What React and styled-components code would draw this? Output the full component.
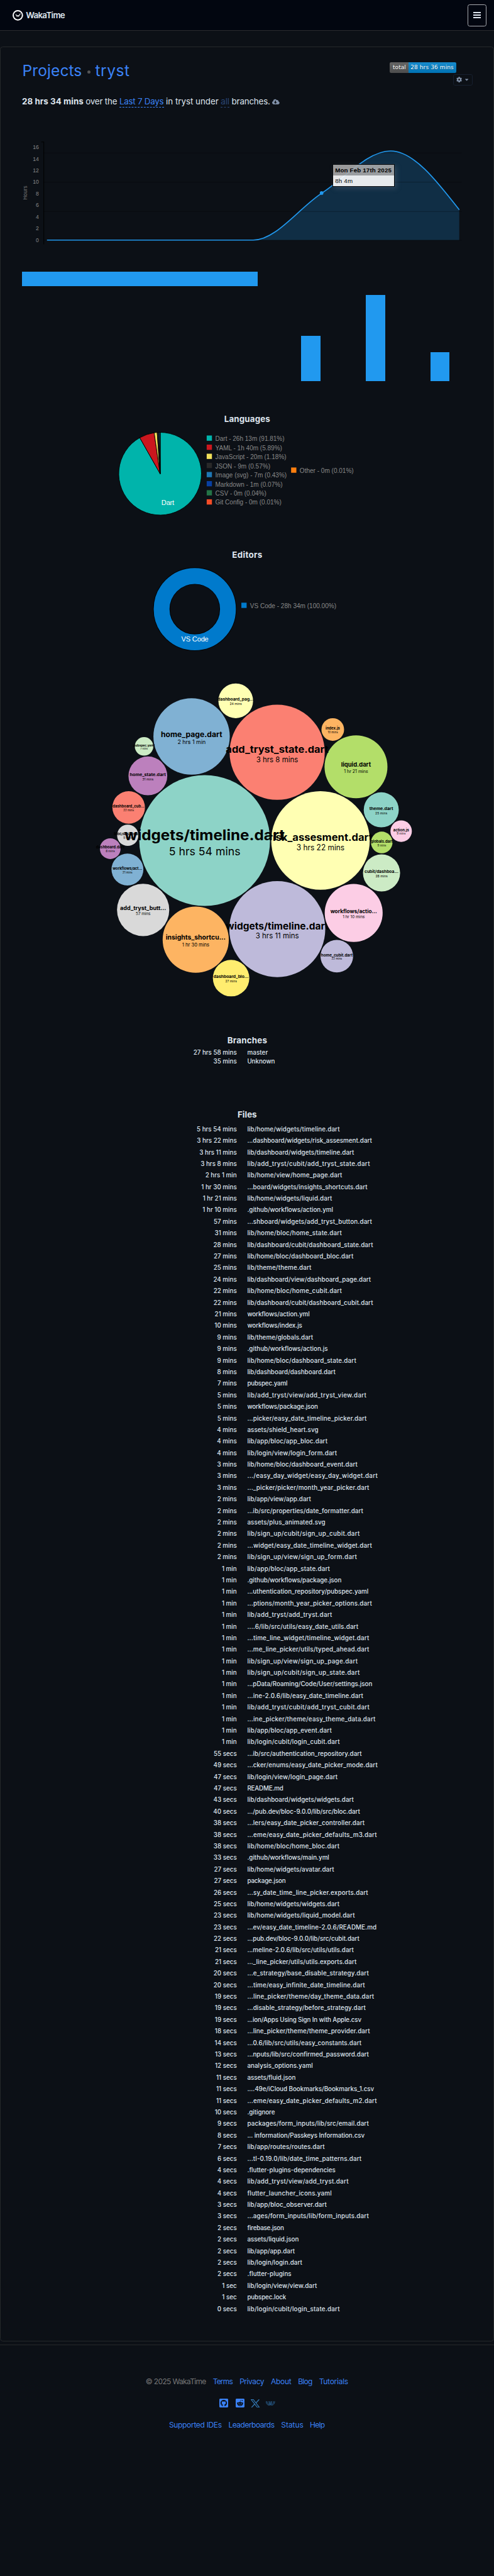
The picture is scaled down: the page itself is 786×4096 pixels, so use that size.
import React, { useLayoutEffect, useRef, useState } from "react";
import styled, { createGlobalStyle } from "styled-components";
import {
  FaGithubSquare,
  FaRedditSquare,
  FaCog,
  FaCaretDown,
  FaCloudDownloadAlt,
} from "react-icons/fa";

// Design units to CSS pixels.
const SCALE = 0.5574;
const px = (n) => `${(n * SCALE).toFixed(3)}px`;

const sans = `Inter, Roboto, "Liberation Sans", sans-serif`;
const chartFont = `"Liberation Sans", Arial, sans-serif`;

const Global = createGlobalStyle`
  html, body { margin: 0; padding: 0; background: #0c1016; }
  body { font-family: ${sans}; color: #dfe5ee; overflow-x: hidden; }
  * { box-sizing: border-box; }
  svg { display: block; }
`;

/* ---------- text set to a fixed measure ---------- */

const Measure = styled.span`
  display: inline-block;
  flex: none;
  white-space: nowrap;
  width: ${(p) => px(p.$w)};
`;

function Fit({ w, children }) {
  const ref = useRef(null);
  const [spacing, setSpacing] = useState(0);
  useLayoutEffect(() => {
    const natural = ref.current.getBoundingClientRect().width;
    setSpacing((w * SCALE - natural) / Math.max(1, children.length - 1));
  }, [w, children]);
  return (
    <Measure $w={w}>
      <span ref={ref} style={{ letterSpacing: spacing }}>{children}</span>
    </Measure>
  );
}

/* ---------- page frame ---------- */

const Page = styled.div`
  display: flex;
  flex-direction: column;
  min-height: 4096px;
  background: #0c1016;
`;

const Header = styled.header`
  display: flex;
  align-items: flex-start;
  justify-content: space-between;
  height: ${px(88)};
  padding: ${px(12)} ${px(22)} 0 ${px(36)};
  background: #020610;
  border-bottom: 1px solid #2b2c2f;
`;

const Brand = styled.div`
  display: flex;
  align-items: center;
  gap: ${px(8)};
  margin-top: ${px(17)};
  height: ${px(30)};
  font-size: ${px(24)};
  font-weight: 600;
  line-height: ${px(30)};
`;

const MenuButton = styled.button`
  display: flex;
  flex-direction: column;
  align-items: center;
  justify-content: center;
  gap: ${px(2.8)};
  width: ${px(53)};
  height: ${px(63)};
  padding: 0 0 ${px(1)};
  background: transparent;
  border: 1px solid #a9abb0;
  border-radius: ${px(6)};
`;

const MenuLine = styled.span`
  width: ${px(21.5)};
  height: ${px(4.3)};
  background: #dfe5ee;
`;

const Card = styled.main`
  margin-top: ${px(45)};
  height: ${px(6547)};
  padding: ${px(43.5)} ${px(60)} 0 ${px(61)};
  border: 1px solid #25282a;
  border-radius: ${px(8)};
`;

/* ---------- title ---------- */

const TitleRow = styled.div`
  display: flex;
  justify-content: space-between;
  align-items: flex-start;
  height: ${px(66)};
`;

const Title = styled.h1`
  display: flex;
  align-items: center;
  margin: 0 0 0 ${px(1)};
  height: ${px(50)};
  font-size: ${px(44)};
  font-weight: 400;
  line-height: ${px(50)};
  color: #3b82f6;
`;

const TitleDot = styled.span`
  width: ${px(10)};
  height: ${px(10)};
  margin: ${px(4)} ${px(13)} 0 ${px(15)};
  border-radius: 50%;
  background: #555;
`;

const Tools = styled.div`
  display: flex;
  flex-direction: column;
  align-items: flex-end;
  gap: ${px(3)};
`;

const Badge = styled.div`
  display: flex;
  height: ${px(30)};
  margin-right: ${px(45)};
  border-radius: ${px(4)};
  overflow: hidden;
  font-family: "DejaVu Sans", Verdana, sans-serif;
  font-size: ${px(16)};
  line-height: ${px(30)};
  color: #fff;
  text-shadow: 0 ${px(1.5)} 0 rgba(1, 1, 1, 0.3);
`;

const BadgePart = styled.span`
  width: ${(p) => px(p.$w)};
  padding-left: ${(p) => px(p.$pad)};
  background: linear-gradient(#ffffff18, #00000018) ${(p) => p.$bg};
`;

const CogButton = styled.button`
  display: flex;
  align-items: center;
  justify-content: space-between;
  width: ${px(55)};
  height: ${px(32)};
  padding: 0 ${px(6)} 0 ${px(7)};
  color: #8090a8;
  font-size: ${px(16.5)};
  background: transparent;
  border: 1px solid #172030;
  border-radius: ${px(5)};
`;

/* ---------- summary ---------- */

const Summary = styled.div`
  display: flex;
  align-items: center;
  gap: ${px(6.2)};
  margin-top: ${px(31)};
  height: ${px(30)};
  font-size: ${px(24)};
  line-height: ${px(30)};
`;

const Strong = styled.strong`
  display: flex;
  font-weight: 700;
`;

const Picker = styled.a`
  display: flex;
  height: ${px(31)};
  margin-bottom: ${px(-1)};
  color: ${(p) => (p.$dim ? "#2b4675" : "#3b82f6")};
  border-bottom: 1px dashed currentColor;
`;

const CloudIcon = styled(FaCloudDownloadAlt)`
  color: #8090a8;
  font-size: ${px(21)};
`;

/* ---------- charts ---------- */

const Chart = styled.svg`
  width: ${(p) => px(p.$w)};
  height: ${(p) => px(p.$h)};
  margin-top: ${(p) => px(p.$top)};
  margin-left: ${px(-62)};
  overflow: visible;
  font-family: ${chartFont};
`;

const TimelineWrap = styled.div`
  position: relative;
  margin-top: ${px(79.4)};
`;

const Tooltip = styled.div`
  position: absolute;
  left: ${px(886)};
  top: ${px(84.5)};
  width: ${px(177)};
  border: 1px solid #05080b;
  font-family: ${chartFont};
  font-size: ${px(17.5)};
  color: #000;
  box-shadow: ${px(6)} ${px(6)} ${px(14)} rgba(130, 140, 150, 0.25);
`;

const TooltipLine = styled.div`
  height: ${px(30.5)};
  padding-left: ${px(6)};
  line-height: ${px(30.5)};
  font-weight: ${(p) => (p.$head ? 700 : 400)};
  background: ${(p) => (p.$head ? "rgba(170,170,170,0.9)" : "rgba(255,255,255,0.9)")};
`;

const TotalBar = styled.div`
  width: ${px(673)};
  height: ${px(42)};
  margin-top: ${px(55)};
  background: #2199ef;
`;

const DayBars = styled.div`
  display: flex;
  justify-content: flex-end;
  align-items: flex-end;
  gap: ${px(129)};
  height: ${px(247)};
  margin-top: ${px(24)};
  padding-right: ${px(65)};
`;

const DayBar = styled.div`
  width: ${px(55.3)};
  height: ${(p) => px(p.$h)};
  background: #2199ef;
`;

const Heading = styled.h3`
  display: flex;
  justify-content: center;
  height: ${px(30)};
  margin: ${(p) => px(p.$top)} 0 0;
  padding-top: ${px(1.5)};
  font-size: ${px(24)};
  font-weight: 700;
  line-height: ${px(30)};
`;

const BLUE = "#2199ef";

function Timeline() {
  const line =
    "M134,686 H723 C788.4,686 853.6,594.2 919,551.8 C984.4,509.4 1049.6,431.7 1115,431.7 C1180.4,431.7 1245.6,515.6 1311,599.6";
  return (
    <TimelineWrap>
      <Chart $w={1410} $h={335} $top={0} viewBox="0 385 1410 335">
        <path d={`${line} V686 Z`} fill={BLUE} opacity="0.22" />
        {[437.4, 520.6, 604.4, 686.5].map((y) => (
          <path key={y} d={`M125,${y} H1318`} stroke="#000" strokeOpacity="0.4" strokeWidth="1.3" />
        ))}
        <path d="M118,406.3 H125 V698" fill="none" stroke="#000" strokeWidth="1.8" />
        {[16, 14, 12, 10, 8, 6, 4, 2, 0].map((v, i) => (
          <text key={v} x="111" y={426.4 + i * 33.1} textAnchor="end" fontSize="15.5" fill="#888">
            {v}
          </text>
        ))}
        <text transform="translate(78 551) rotate(-90)" textAnchor="middle" fontSize="15" fill="#777" textLength="40">
          Hours
        </text>
        <path d={line} fill="none" stroke={BLUE} strokeWidth="3" />
        <circle cx="918" cy="551.8" r="5.2" fill={BLUE} />
      </Chart>
      <Tooltip>
        <TooltipLine $head><Fit w={161}>Mon Feb 17th 2025</Fit></TooltipLine>
        <TooltipLine><Fit w={50}>8h 4m</Fit></TooltipLine>
      </Tooltip>
    </TimelineWrap>
  );
}

const LANGUAGES = [
  ["Dart - 26h 13m (91.81%)", 91.81, "#00b4ab", 197.5],
  ["YAML - 1h 40m (5.89%)", 5.89, "#cb171e", 191],
  ["JavaScript - 20m (1.18%)", 1.18, "#f1e05a", 203],
  ["JSON - 9m (0.57%)", 0.57, "#292929", 157],
  ["Image (svg) - 7m (0.43%)", 0.43, "#1f77b4", 204],
  ["Markdown - 1m (0.07%)", 0.07, "#083fa1", 192],
  ["CSV - 0m (0.04%)", 0.04, "#237346", 146],
  ["Git Config - 0m (0.01%)", 0.01, "#f44d27", 189],
];

function slicePath(cx, cy, r, from, to) {
  const at = (f) => [cx + r * Math.sin(f * 2 * Math.PI), cy - r * Math.cos(f * 2 * Math.PI)];
  const [x1, y1] = at(from);
  const [x2, y2] = at(to);
  return `M${cx},${cy} L${x1},${y1} A${r},${r} 0 ${to - from > 0.5 ? 1 : 0} 1 ${x2},${y2} Z`;
}

function LegendItem({ x, y, color, label, w }) {
  return (
    <g>
      <rect x={x} y={y} width="15" height="15" fill={color} />
      <text x={x + 24.5} y={y + 15.4} fontSize="18" fill="#888" textLength={w} lengthAdjust="spacingAndGlyphs">
        {label}
      </text>
    </g>
  );
}

function LanguagesPie() {
  let start = 0;
  return (
    <Chart $w={1410} $h={255} $top={14.8} viewBox="0 1225 1410 255">
      {LANGUAGES.map(([label, pct, color]) => {
        const from = start;
        start += pct / 100;
        return (
          <path key={label} d={slicePath(457, 1351, 118, from, start)} fill={color} stroke="#000" strokeWidth="1.6" />
        );
      })}
      <text x="479" y="1440" textAnchor="middle" fontSize="20" fill="#fff" textLength="36.5">Dart</text>
      {LANGUAGES.map(([label, , color, w], i) => (
        <LegendItem key={label} x={590} y={1242 + i * 26} color={color} label={label} w={w} />
      ))}
      <LegendItem x={831} y={1333.3} color="#ff7f0e" label="Other - 0m (0.01%)" w={154} />
    </Chart>
  );
}

function EditorsDonut() {
  return (
    <Chart $w={1410} $h={260} $top={13.4} viewBox="0 1610 1410 260">
      <circle cx="556" cy="1738.4" r="94.7" fill="none" stroke="#000" strokeWidth="48.5" />
      <circle cx="556" cy="1738.4" r="94.7" fill="none" stroke="#007acc" strokeWidth="45.2" />
      <text x="556.5" y="1830" textAnchor="middle" fontSize="20" fill="#fff" textLength="77.5">VS Code</text>
      <LegendItem x={689} y={1720} color="#007acc" label="VS Code - 28h 34m (100.00%)" w={246.5} />
    </Chart>
  );
}

// cx, cy, r, fill, name [text, size, width, baseline], duration [text, size, width, baseline]
const BUBBLES = [
  [364.7, 2382.5, 30.3, "#d9d9d9", ["bloc/dashboa...", 10, 79, 2383], ["9 mins", 8, 25, 2392.5]],
  [914.9, 2397.2, 140.6, "#ffffb3", ["risk_assesment.dart", 27.5, 297, 2397.5], ["3 hrs 22 mins", 22.5, 137, 2426]],
  [584.2, 2397.2, 186.6, "#8dd3c7", ["widgets/timeline.dart", 40, 457.5, 2397], ["5 hrs 54 mins", 32, 204, 2438.8]],
  [791.5, 2650, 137, "#bebada", ["widgets/timeline.dart", 27, 293, 2650.6], ["3 hrs 11 mins", 21, 123.5, 2676.9]],
  [546.9, 2100.6, 109, "#80b1d3", ["home_page.dart", 20.5, 175, 2101.9], ["2 hrs 1 min", 15.5, 80.5, 2122.5]],
  [558.7, 2680.3, 94.4, "#fdb462", ["insights_shortcu...", 18, 171, 2680], ["1 hr 30 mins", 14, 78, 2698.8]],
  [1016.2, 2186.9, 89.8, "#b3de69", ["liquid.dart", 16.5, 85, 2186.9], ["1 hr 21 mins", 13, 69, 2203.8]],
  [791.2, 2145.6, 135.8, "#fb8072", ["add_tryst_state.dart", 27, 293, 2146.9], ["3 hrs 8 mins", 21, 119.5, 2173.8]],
  [1009.6, 2604, 82.7, "#fccde5", ["workflows/actio...", 15.5, 133, 2604.4], ["1 hr 10 mins", 12, 63, 2619.4]],
  [408.6, 2595.3, 74.6, "#d9d9d9", ["add_tryst_butt...", 15, 131.5, 2595.6], ["57 mins", 11, 42, 2610.6]],
  [422.1, 2213, 55.4, "#bc80bd", ["home_state.dart", 12, 103, 2213], ["31 mins", 9, 31.6, 2225.6]],
  [1089.1, 2489.7, 53, "#ccebc5", ["cubit/dashboa...", 12, 97, 2490], ["28 mins", 9, 34.5, 2501.9]],
  [659.7, 2790, 52, "#ffed6f", ["dashboard_blo...", 12, 100, 2790], ["27 mins", 9, 33, 2802.5]],
  [1088.3, 2309.7, 50, "#8dd3c7", ["theme.dart", 12, 68, 2310], ["25 mins", 9, 34, 2322.5]],
  [672.9, 1998.8, 49.5, "#ffffb3", ["dashboard_pag...", 12, 103, 1998.8], ["24 mins", 9, 34.5, 2011]],
  [961.4, 2727.2, 46.5, "#bebada", ["home_cubit.dart", 11, 90, 2728], ["22 mins", 8.5, 30, 2738]],
  [367.3, 2303, 46.5, "#fb8072", ["dashboard_cub...", 11, 91, 2303], ["22 mins", 8.5, 30, 2314.4]],
  [363.8, 2480, 45.5, "#80b1d3", ["workflows/act...", 11, 84.5, 2480], ["21 mins", 8.5, 28, 2491]],
  [949.9, 2080.6, 32.3, "#fdb462", ["index.js", 11, 41, 2081], ["10 mins", 8.5, 29, 2091]],
  [1089.7, 2402.8, 30.8, "#b3de69", ["globals.dart", 10, 63, 2403], ["9 mins", 8, 25, 2414.4]],
  [1145.1, 2370.6, 30.6, "#fccde5", ["action.js", 10.5, 45, 2371], ["9 mins", 8, 25, 2381]],
  [314.7, 2420.6, 29.5, "#bc80bd", ["dashboard.dart", 10, 81, 2420], ["8 mins", 8, 26, 2431]],
  [411.2, 2128.8, 26.4, "#ccebc5", ["pubspec.yaml", 9, 61, 2128.8], ["7 mins", 7, 21, 2138]],
];

const BubbleText = styled.text`
  font-family: ${sans};
  font-weight: ${(p) => (p.$bold ? 700 : 400)};
  text-anchor: middle;
  fill: #000;
`;

function Bubbles() {
  return (
    <Chart $w={1410} $h={930} $top={60} viewBox="0 1930 1410 930">
      {BUBBLES.map(([cx, cy, r, fill, name, time]) => (
        <g key={`${cx}-${cy}`}>
          <circle cx={cx} cy={cy} r={r} fill={fill} />
          {[name, time].map(([text, size, w, y], i) => (
            <BubbleText key={text} $bold={i === 0} x={cx} y={y} fontSize={size} textLength={w} lengthAdjust="spacingAndGlyphs">
              {text}
            </BubbleText>
          ))}
        </g>
      ))}
    </Chart>
  );
}

/* ---------- tables ---------- */

const List = styled.div`
  display: flex;
  flex-direction: column;
  margin-top: ${px(9.7)};
`;

const Row = styled.div`
  display: grid;
  grid-template-columns: ${px(613)} 1fr;
  column-gap: ${px(30)};
  height: ${(p) => px(p.$h)};
  font-size: ${px(17.6)};
  font-weight: 450;
  line-height: ${(p) => px(p.$h)};
  white-space: nowrap;
`;

const Duration = styled.div`
  text-align: right;
`;

const BRANCHES = [
  ["27 hrs 58 mins", "master", 59],
  ["35 mins", "Unknown", 79],
];

const FILES = [
  ["5 hrs 54 mins", "lib/home/widgets/timeline.dart", 264],
  ["3 hrs 22 mins", "...dashboard/widgets/risk_assesment.dart", 356],
  ["3 hrs 11 mins", "lib/dashboard/widgets/timeline.dart", 305],
  ["3 hrs 8 mins", "lib/add_tryst/cubit/add_tryst_state.dart", 350],
  ["2 hrs 1 min", "lib/home/view/home_page.dart", 271],
  ["1 hr 30 mins", "...board/widgets/insights_shortcuts.dart", 343],
  ["1 hr 21 mins", "lib/home/widgets/liquid.dart", 242],
  ["1 hr 10 mins", ".github/workflows/action.yml", 245],
  ["57 mins", "...shboard/widgets/add_tryst_button.dart", 356],
  ["31 mins", "lib/home/bloc/home_state.dart", 270],
  ["28 mins", "lib/dashboard/cubit/dashboard_state.dart", 359],
  ["27 mins", "lib/home/bloc/dashboard_bloc.dart", 303],
  ["25 mins", "lib/theme/theme.dart", 183],
  ["24 mins", "lib/dashboard/view/dashboard_page.dart", 353],
  ["22 mins", "lib/home/bloc/home_cubit.dart", 270],
  ["22 mins", "lib/dashboard/cubit/dashboard_cubit.dart", 359],
  ["21 mins", "workflows/action.yml", 178],
  ["10 mins", "workflows/index.js", 157],
  ["9 mins", "lib/theme/globals.dart", 188],
  ["9 mins", ".github/workflows/action.js", 230],
  ["9 mins", "lib/home/bloc/dashboard_state.dart", 311],
  ["8 mins", "lib/dashboard/dashboard.dart", 252],
  ["7 mins", "pubspec.yaml", 115],
  ["5 mins", "lib/add_tryst/view/add_tryst_view.dart", 340],
  ["5 mins", "workflows/package.json", 202],
  ["5 mins", "...picker/easy_date_timeline_picker.dart", 341],
  ["4 mins", "assets/shield_heart.svg", 203],
  ["4 mins", "lib/app/bloc/app_bloc.dart", 229],
  ["4 mins", "lib/login/view/login_form.dart", 256],
  ["3 mins", "lib/home/bloc/dashboard_event.dart", 315],
  ["3 mins", ".../easy_day_widget/easy_day_widget.dart", 372],
  ["3 mins", "..._picker/picker/month_year_picker.dart", 348],
  ["2 mins", "lib/app/view/app.dart", 182],
  ["2 mins", "...ib/src/properties/date_formatter.dart", 331],
  ["2 mins", "assets/plus_animated.svg", 223],
  ["2 mins", "lib/sign_up/cubit/sign_up_cubit.dart", 321],
  ["2 mins", "...widget/easy_date_timeline_widget.dart", 356],
  ["2 mins", "lib/sign_up/view/sign_up_form.dart", 313],
  ["1 min", "lib/app/bloc/app_state.dart", 236],
  ["1 min", ".github/workflows/package.json", 269],
  ["1 min", "...uthentication_repository/pubspec.yaml", 346],
  ["1 min", "...ptions/month_year_picker_options.dart", 356],
  ["1 min", "lib/add_tryst/add_tryst.dart", 242],
  ["1 min", "....6/lib/src/utils/easy_date_utils.dart", 317],
  ["1 min", "...time_line_widget/timeline_widget.dart", 348],
  ["1 min", "...me_line_picker/utils/typed_ahead.dart", 348],
  ["1 min", "lib/sign_up/view/sign_up_page.dart", 315],
  ["1 min", "lib/sign_up/cubit/sign_up_state.dart", 321],
  ["1 min", "...pData/Roaming/Code/User/settings.json", 357],
  ["1 min", "...ine-2.0.6/lib/easy_date_timeline.dart", 331],
  ["1 min", "lib/add_tryst/cubit/add_tryst_cubit.dart", 349],
  ["1 min", "...ine_picker/theme/easy_theme_data.dart", 366],
  ["1 min", "lib/app/bloc/app_event.dart", 241],
  ["1 min", "lib/login/cubit/login_cubit.dart", 264],
  ["55 secs", "...ib/src/authentication_repository.dart", 327],
  ["49 secs", "...cker/enums/easy_date_picker_mode.dart", 372],
  ["47 secs", "lib/login/view/login_page.dart", 258],
  ["47 secs", "README.md", 103],
  ["43 secs", "lib/dashboard/widgets/widgets.dart", 304],
  ["40 secs", ".../pub.dev/bloc-9.0.0/lib/src/bloc.dart", 322],
  ["38 secs", "...lers/easy_date_picker_controller.dart", 335],
  ["38 secs", "...eme/easy_date_picker_defaults_m3.dart", 370],
  ["38 secs", "lib/home/bloc/home_bloc.dart", 263],
  ["33 secs", ".github/workflows/main.yml", 234],
  ["27 secs", "lib/home/widgets/avatar.dart", 248],
  ["27 secs", "package.json", 110],
  ["26 secs", "...sy_date_time_line_picker.exports.dart", 345],
  ["25 secs", "lib/home/widgets/widgets.dart", 263],
  ["23 secs", "lib/home/widgets/liquid_model.dart", 307],
  ["23 secs", "...ev/easy_date_timeline-2.0.6/README.md", 369],
  ["22 secs", "...pub.dev/bloc-9.0.0/lib/src/cubit.dart", 320],
  ["21 secs", "...meline-2.0.6/lib/src/utils/utils.dart", 304],
  ["21 secs", "..._line_picker/utils/utils.exports.dart", 312],
  ["20 secs", "...e_strategy/base_disable_strategy.dart", 347],
  ["20 secs", "...time/easy_infinite_date_timeline.dart", 336],
  ["19 secs", "...line_picker/theme/day_theme_data.dart", 362],
  ["19 secs", "...disable_strategy/before_strategy.dart", 338],
  ["19 secs", "...ion/Apps Using Sign In with Apple.csv", 326],
  ["18 secs", "...line_picker/theme/theme_provider.dart", 350],
  ["14 secs", "...0.6/lib/src/utils/easy_constants.dart", 326],
  ["13 secs", "...nputs/lib/src/confirmed_password.dart", 347],
  ["12 secs", "analysis_options.yaml", 187],
  ["11 secs", "assets/fluid.json", 138],
  ["11 secs", "....49e/iCloud Bookmarks/Bookmarks_1.csv", 362],
  ["11 secs", "...eme/easy_date_picker_defaults_m2.dart", 370],
  ["10 secs", ".gitignore", 79],
  ["9 secs", "packages/form_inputs/lib/src/email.dart", 347],
  ["8 secs", "... information/Passkeys Information.csv", 335],
  ["7 secs", "lib/app/routes/routes.dart", 221],
  ["6 secs", "...tl-0.19.0/lib/date_time_patterns.dart", 326],
  ["4 secs", ".flutter-plugins-dependencies", 252],
  ["4 secs", "lib/add_tryst/view/add_tryst.dart", 289],
  ["4 secs", "flutter_launcher_icons.yaml", 241],
  ["3 secs", "lib/app/bloc_observer.dart", 227],
  ["3 secs", "...ages/form_inputs/lib/form_inputs.dart", 347],
  ["2 secs", "firebase.json", 105],
  ["2 secs", "assets/liquid.json", 147],
  ["2 secs", "lib/app/app.dart", 136],
  ["2 secs", "lib/login/login.dart", 157],
  ["2 secs", ".flutter-plugins", 126],
  ["1 sec", "lib/login/view/view.dart", 199],
  ["1 sec", "pubspec.lock", 111],
  ["0 secs", "lib/login/cubit/login_state.dart", 264],
];

function Rows({ items, height }) {
  return (
    <List>
      {items.map(([time, name, w], i) => (
        <Row key={i} $h={height}>
          <Duration>{time}</Duration>
          <Fit w={w}>{name}</Fit>
        </Row>
      ))}
    </List>
  );
}

/* ---------- footer ---------- */

const Footer = styled.footer`
  display: flex;
  flex-direction: column;
  align-items: center;
  flex: 1;
  margin-top: ${px(9)};
  padding-top: ${px(89)};
  border-top: 1px solid #25282a;
`;

const LinkRow = styled.nav`
  display: flex;
  gap: ${px(18.6)};
  height: ${px(30)};
  margin-top: ${(p) => px(p.$top)};
  font-size: ${px(21.5)};
  line-height: ${px(30)};
  color: #3b82f6;
`;

const Copyright = styled.span`
  display: flex;
  color: #777;
`;

const SocialRow = styled.div`
  display: flex;
  align-items: center;
  gap: ${px(17)};
  height: ${px(27)};
  margin-top: ${px(32.5)};
  color: #3b82f6;
`;

const SocialIcon = styled.svg`
  width: ${px(26)};
  height: ${(p) => px(p.$h)};
`;

const squareIcon = { width: 26 * SCALE, height: 29.7 * SCALE };

const FOOTER_TOP = [["Terms", 57.7], ["Privacy", 70.7], ["About", 59], ["Blog", 41.5], ["Tutorials", 83.5]];
const FOOTER_BOTTOM = [["Supported IDEs", 151], ["Leaderboards", 132], ["Status", 63.5], ["Help", 43]];

export default function App() {
  return (
    <Page>
      <Global />
      <Header>
        <Brand>
          <svg width={30 * SCALE} height={30 * SCALE} viewBox="0 0 30 30" fill="none" stroke="#fff">
            <circle cx="15" cy="15" r="13.2" strokeWidth="3.6" />
            <path d="M9.6 13 L12.8 18 L15.3 15 L17 18 L21.8 10.8" strokeWidth="2.2" strokeLinecap="round" strokeLinejoin="round" />
          </svg>
          <Fit w={112}>WakaTime</Fit>
        </Brand>
        <MenuButton aria-label="Menu">
          <MenuLine />
          <MenuLine />
          <MenuLine />
        </MenuButton>
      </Header>

      <Card>
        <TitleRow>
          <Title>
            <Fit w={170}>Projects</Fit>
            <TitleDot />
            <Fit w={98}>tryst</Fit>
          </Title>
          <Tools>
            <Badge>
              <BadgePart $w={53} $pad={9} $bg="#555"><Fit w={37}>total</Fit></BadgePart>
              <BadgePart $w={138} $pad={6.5} $bg="#007ec6"><Fit w={123}>28 hrs 36 mins</Fit></BadgePart>
            </Badge>
            <CogButton aria-label="Settings">
              <FaCog />
              <FaCaretDown />
            </CogButton>
          </Tools>
        </TitleRow>

        <Summary>
          <Strong><Fit w={175.5}>28 hrs 34 mins</Fit></Strong>
          <Fit w={90}>over the</Fit>
          <Picker><Fit w={127}>Last 7 Days</Fit></Picker>
          <Fit w={150}>in tryst under</Fit>
          <Picker $dim><Fit w={25}>all</Fit></Picker>
          <Fit w={110}>branches.</Fit>
          <CloudIcon />
        </Summary>

        <Timeline />
        <TotalBar />
        <DayBars>
          <DayBar $h={130} />
          <DayBar $h={247} />
          <DayBar $h={83.5} />
        </DayBars>

        <Heading $top={92.2}><Fit w={131}>Languages</Fit></Heading>
        <LanguagesPie />

        <Heading $top={86.6}><Fit w={86}>Editors</Fit></Heading>
        <EditorsDonut />

        <Bubbles />

        <Heading $top={92.3}><Fit w={113.5}>Branches</Fit></Heading>
        <Rows items={BRANCHES} height={25} />

        <Heading $top={122.6}><Fit w={55}>Files</Fit></Heading>
        <Rows items={FILES} height={33} />
      </Card>

      <Footer>
        <LinkRow $top={0}>
          <Copyright><Fit w={173}>© 2025 WakaTime</Fit></Copyright>
          {FOOTER_TOP.map(([t, w]) => <Fit key={t} w={w}>{t}</Fit>)}
        </LinkRow>
        <SocialRow>
          <FaGithubSquare {...squareIcon} />
          <FaRedditSquare {...squareIcon} />
          <SocialIcon $h={24} viewBox="0 0 26 24" fill="none" stroke="#337ab7" strokeWidth="2">
            <path d="M1.5 1 H7.5 L24.5 23 H18.5 Z" />
            <path d="M24 0.5 L14.6 10.8 M11.2 13.6 L2 23.5" strokeWidth="2.4" />
          </SocialIcon>
          <SocialIcon $h={12} viewBox="0 0 26 12" fill="none" stroke="#337ab7" strokeWidth="1.3">
            <path d="M0.8 0.5 C0.8 7 4.5 11.3 9 11.3 C14 11.3 17.5 7 17.5 0.5" />
            <path d="M3.4 0.5 C3.4 5.5 5.8 8.8 9 8.8 C12.5 8.8 15 5.5 15 0.5" />
            <path d="M8.5 0.5 C8.5 7 12 11.3 17 11.3 C21.5 11.3 25.2 7 25.2 0.5" />
            <path d="M11 0.5 C11 5.5 13.5 8.8 17 8.8 C20.2 8.8 22.6 5.5 22.6 0.5" />
          </SocialIcon>
        </SocialRow>
        <LinkRow $top={34.5}>
          {FOOTER_BOTTOM.map(([t, w]) => <Fit key={t} w={w}>{t}</Fit>)}
        </LinkRow>
      </Footer>
    </Page>
  );
}
